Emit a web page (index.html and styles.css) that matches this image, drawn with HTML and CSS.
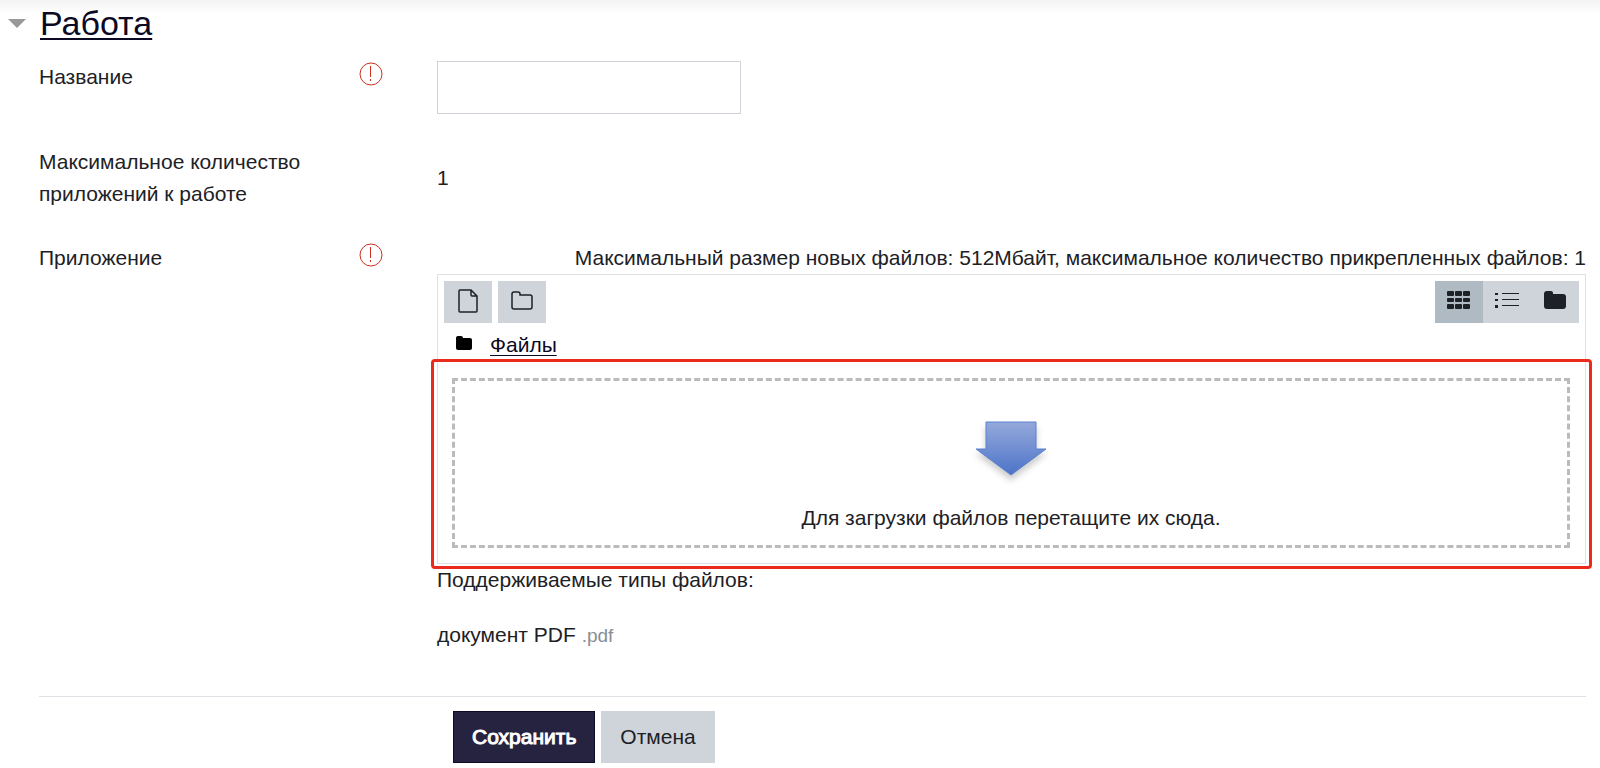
FILE: index.html
```html
<!DOCTYPE html>
<html lang="ru">
<head>
    <meta charset="UTF-8">
    <meta name="viewport" content="width=device-width, initial-scale=1.0">
    <title>Работа</title>
    <link rel="stylesheet" href="styles.css">
</head>
<body>

<form class="work-form">
    <!-- Section title -->
    <h3 class="section-title">
        <svg class="caret" width="18" height="9" viewBox="0 0 18 9" aria-hidden="true"><path d="M0 0h18L9 9z" fill="#999"/></svg>
        <a href="#work">Работа</a>
    </h3>

    <div class="rows" id="work">
        <div class="row">
            <div class="row-label">
                <label for="workName">Название</label>
                <svg class="required" width="24" height="24" viewBox="0 0 24 24" role="img" aria-label="Обязательное поле">
                    <circle cx="12" cy="12" r="11"/>
                    <path d="M11.5 4v11M11.5 17v2"/>
                </svg>
            </div>
            <div class="row-field">
                <input id="workName" class="text-input" type="text">
            </div>
        </div>

        <div class="row">
            <div class="row-label">
                <span>Максимальное количество приложений к работе</span>
            </div>
            <div class="row-field centered">1</div>
        </div>

        <div class="row">
            <div class="row-label">
                <span>Приложение</span>
                <svg class="required" width="24" height="24" viewBox="0 0 24 24" role="img" aria-label="Обязательное поле">
                    <circle cx="12" cy="12" r="11"/>
                    <path d="M11.5 4v11M11.5 17v2"/>
                </svg>
            </div>
            <div class="row-field">
                <p class="restrictions">Максимальный размер новых файлов: 512Мбайт, максимальное количество прикрепленных файлов: 1</p>

                <!-- File manager -->
                <div class="filemanager">
                    <div class="toolbar">
                        <div class="actions">
                            <button type="button" class="tool" aria-label="Добавить">
                                <svg width="20" height="24" viewBox="0 0 20 24" class="outline"><path d="M2 1h11l6 6v15a1 1 0 0 1-1 1H2a1 1 0 0 1-1-1V2a1 1 0 0 1 1-1zM13 1v5a1 1 0 0 0 1 1h5"/></svg>
                            </button>
                            <button type="button" class="tool" aria-label="Создать папку">
                                <svg width="22" height="22" viewBox="0 0 22 22" class="outline"><path d="M3 3h4a2 2 0 0 1 2 2v1h10a2 2 0 0 1 2 2v10a2 2 0 0 1-2 2H3a2 2 0 0 1-2-2V5a2 2 0 0 1 2-2z"/></svg>
                            </button>
                        </div>
                        <div class="views">
                            <button type="button" class="tool active" aria-label="Значки">
                                <svg width="24" height="18" viewBox="0 0 24 18" fill="#1d2125">
                                    <rect width="7" height="5" rx="1"/><rect x="8" width="7" height="5" rx="1"/><rect x="16" width="7" height="5" rx="1"/>
                                    <rect y="7" width="7" height="4" rx="1"/><rect x="8" y="7" width="7" height="4" rx="1"/><rect x="16" y="7" width="7" height="4" rx="1"/>
                                    <rect y="13" width="7" height="5" rx="1"/><rect x="8" y="13" width="7" height="5" rx="1"/><rect x="16" y="13" width="7" height="5" rx="1"/>
                                </svg>
                            </button>
                            <button type="button" class="tool" aria-label="Список">
                                <svg width="24" height="18" viewBox="0 0 24 18" fill="#1d2125">
                                    <rect y="2" width="3" height="2"/><rect y="8" width="3" height="2"/><rect y="14" width="3" height="3"/>
                                    <rect x="7" y="2" width="17" height="1"/><rect x="7" y="8" width="17" height="1"/><rect x="7" y="14" width="17" height="1"/>
                                </svg>
                            </button>
                            <button type="button" class="tool" aria-label="Дерево папок">
                                <svg width="22" height="18" viewBox="0 0 22 18"><path fill="#1d2125" d="M3 0h4a2 2 0 0 1 2 2v1h10a3 3 0 0 1 3 3v9a3 3 0 0 1-3 3H3a3 3 0 0 1-3-3V3a3 3 0 0 1 3-3z"/></svg>
                            </button>
                        </div>
                    </div>

                    <div class="path">
                        <svg width="16" height="18" viewBox="0 0 16 18" aria-hidden="true"><path d="M2 0h3a2 2 0 0 1 2 2h7a2 2 0 0 1 2 2v8a2 2 0 0 1-2 2H2a2 2 0 0 1-2-2V2a2 2 0 0 1 2-2z"/></svg>
                        <a href="#files">Файлы</a>
                    </div>

                    <div class="drop-wrap" id="files">
                        <div class="dropzone">
                            <svg class="drop-arrow" width="72" height="56" viewBox="0 0 72 56" aria-hidden="true">
                                <defs>
                                    <linearGradient id="arrowFill" x1="0" y1="0" x2="0" y2="1">
                                        <stop offset="0" stop-color="#94a9db"/>
                                        <stop offset="1" stop-color="#4d74c8"/>
                                    </linearGradient>
                                </defs>
                                <path d="M11 1h50v27h10L36 54 1 28h10z" fill="url(#arrowFill)" stroke="#5c80cf"/>
                            </svg>
                            <span>Для загрузки файлов перетащите их сюда.</span>
                        </div>
                    </div>
                </div>

                <p class="types-title">Поддерживаемые типы файлов:</p>
                <p>документ PDF <small>.pdf</small></p>
            </div>
        </div>
    </div>

    <!-- Form buttons -->
    <div class="row form-footer">
        <div class="buttons">
            <button type="submit" class="btn btn-primary">Сохранить</button>
            <button type="button" class="btn btn-secondary">Отмена</button>
        </div>
    </div>
</form>

</body>
</html>
```

FILE: styles.css
```css
* {
    box-sizing: border-box;
    margin: 0;
    padding: 0;
}

:root {
    --text-color: #1d2125;
    --link-color: #0c0924;
    --primary-color: #25233f;
    --grey-color: #ced4da;
    --grey-active: #afbac3;
    --line-color: #dee2e6;
    --danger-color: #ca3120;
    --highlight-color: #ea2a1c;
}

body {
    font-family: "Liberation Sans", Arial, sans-serif;
    font-size: 21px;
    line-height: 32px;
    color: var(--text-color);
    background: linear-gradient(#f3f3f3, #fff 14px) no-repeat #fff;
}

a {
    color: var(--link-color);
    text-decoration: underline;
    text-decoration-thickness: 1px;
    text-underline-offset: 3px;
}

button,
input {
    font: inherit;
    color: inherit;
}

.work-form {
    padding: 3px 14px 4px 39px;
}

/* Section title */
.section-title {
    display: flex;
    align-items: center;
    gap: 14px;
    margin-left: -31px;
    font-size: 34px;
    font-weight: 400;
    line-height: 40px;
}

.section-title a {
    text-decoration-thickness: 2px;
}

/* Label and field rows */
.rows {
    display: flex;
    flex-direction: column;
    gap: 32px;
    padding: 18px 0 44px;
}

.row {
    display: grid;
    grid-template-columns: 1fr 3fr;
    column-gap: 15px;
}

.row-label {
    display: flex;
    justify-content: space-between;
    align-items: flex-start;
    padding-right: 39px;
}

.required {
    flex: none;
    margin-top: 1px;
    fill: none;
    stroke: var(--danger-color);
}

.centered {
    align-self: center;
}

.text-input {
    display: block;
    width: 304px;
    height: 53px;
    padding: 8px 12px;
    border: 1px solid var(--grey-color);
    background: #fff;
}

.restrictions {
    text-align: right;
}

/* File manager */
.filemanager {
    border: 1px solid var(--line-color);
}

.toolbar {
    display: flex;
    justify-content: space-between;
    padding: 6px;
}

.actions {
    display: flex;
    gap: 6px;
}

.views {
    display: flex;
}

.tool {
    display: flex;
    justify-content: center;
    width: 48px;
    height: 42px;
    padding-top: 10px;
    border: 0;
    background: var(--grey-color);
}

.tool.active {
    background: var(--grey-active);
}

.tool .outline {
    margin-top: -2px;
    fill: none;
    stroke: var(--text-color);
    stroke-width: 1.5;
}

.path {
    display: flex;
    align-items: center;
    gap: 18px;
    padding-left: 18px;
}

.drop-wrap {
    position: relative;
    padding: 17px 15px 15px 14px;
}

.drop-wrap::after {
    content: "";
    position: absolute;
    inset: -2px -7px -6px;
    border: 3px solid var(--highlight-color);
    border-radius: 4px;
    pointer-events: none;
}

.dropzone {
    display: flex;
    flex-direction: column;
    align-items: center;
    gap: 25px;
    padding: 40px 0 11px;
    border: 3px dashed #bbb;
}

.drop-arrow {
    overflow: visible;
    filter: drop-shadow(0 5px 3px rgba(0, 0, 0, 0.2));
}

.types-title {
    margin-bottom: 23px;
}

small {
    font-size: 19px;
    color: #868e96;
}

/* Form buttons */
.form-footer {
    padding-top: 14px;
    border-top: 1px solid var(--line-color);
}

.buttons {
    grid-column: 2;
    display: flex;
    gap: 6px;
    padding-left: 16px;
}

.btn {
    height: 52px;
    padding: 0 18px;
    border: 1px solid var(--grey-color);
    background: var(--grey-color);
}

.btn-primary {
    border-color: #0c0924;
    background: var(--primary-color);
    color: #fff;
    -webkit-text-stroke: 1px #fff;
}
```
